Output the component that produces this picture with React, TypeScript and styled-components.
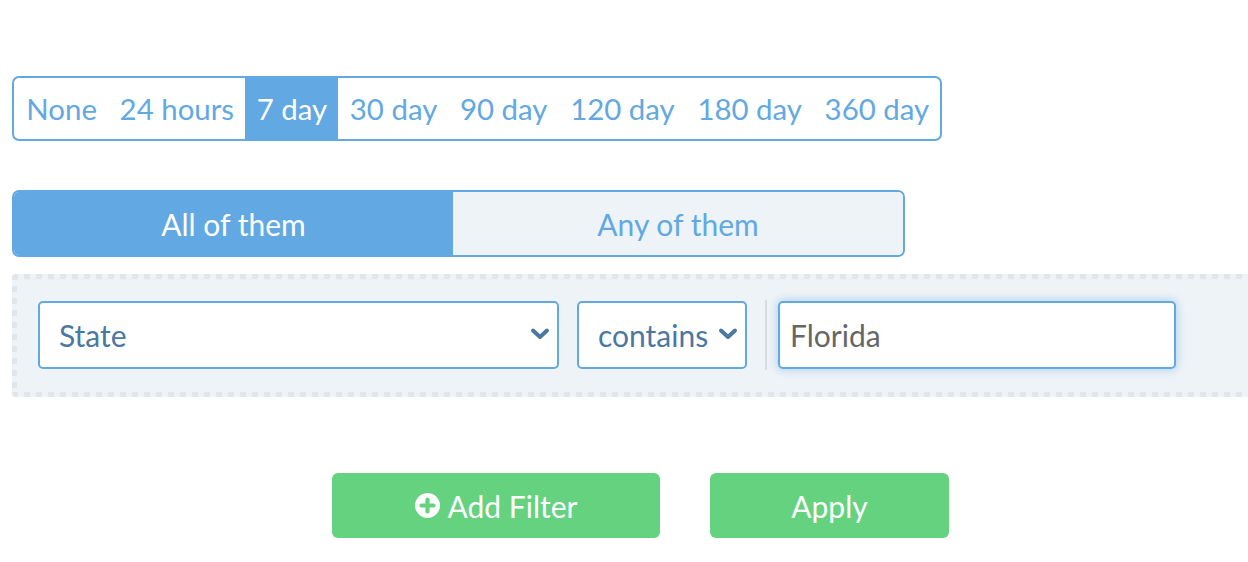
import React, { useState } from 'react';
import styled, { createGlobalStyle } from 'styled-components';

const BLUE = '#62a8e2';
const PALE = '#eef3f7';
const GREEN = '#64d27f';
const DOT = '#e2e6e9';

const periods = ['None', '24 hours', '7 day', '30 day', '90 day', '120 day', '180 day', '360 day'];

const GlobalStyle = createGlobalStyle`
  html, body {
    margin: 0;
    padding: 0;
    background: #fff;
    overflow: hidden;
  }
  body {
    font-family: Lato, "Open Sans", sans-serif;
  }
`;

const ChevronDown = () => (
  <svg width="20" height="14" viewBox="0 0 20 14" fill="none">
    <path d="M3 3.5 L10 10 L17 3.5" stroke="#4a78a0" strokeWidth="4" strokeLinecap="round" strokeLinejoin="round" />
  </svg>
);

const PlusCircle = () => (
  <svg width="25" height="25" viewBox="0 0 24 24">
    <circle cx="12" cy="12" r="12" fill="#fff" />
    <path d="M12 6.2 V17.8 M6.2 12 H17.8" stroke={GREEN} strokeWidth="4" strokeLinecap="round" />
  </svg>
);

export default function App() {
  const [period, setPeriod] = useState('7 day');
  const [mode, setMode] = useState<'all' | 'any'>('all');

  return (
    <>
      <GlobalStyle />
      <Page>
        <PeriodBar>
          {periods.map((p) => (
            <PeriodItem key={p} active={p === period} onClick={() => setPeriod(p)}>
              {p}
            </PeriodItem>
          ))}
        </PeriodBar>

        <Toggle>
          <ToggleHalf side="left" active={mode === 'all'} onClick={() => setMode('all')}>
            All of them
          </ToggleHalf>
          <ToggleHalf side="right" active={mode === 'any'} onClick={() => setMode('any')}>
            Any of them
          </ToggleHalf>
        </Toggle>

        <FilterPanel>
          <SelectBox width={521}>
            <span>State</span>
            <ChevronDown />
          </SelectBox>
          <SelectBox width={170}>
            <span>contains</span>
            <ChevronDown />
          </SelectBox>
          <Divider />
          <ValueInput defaultValue="Florida" />
        </FilterPanel>

        <ButtonRow>
          <GreenButton width={328}>
            <PlusCircle />
            Add Filter
          </GreenButton>
          <GreenButton width={239}>Apply</GreenButton>
        </ButtonRow>
      </Page>
    </>
  );
}

const Page = styled.div`
  padding: 76px 0 0 12px;
  width: 1270px;
  box-sizing: border-box;
  display: flex;
  flex-direction: column;
  align-items: flex-start;
`;

const PeriodBar = styled.div`
  display: inline-flex;
  border: 2px solid ${BLUE};
  border-radius: 7px;
  overflow: hidden;
  height: 65px;
  box-sizing: border-box;
  padding-left: 1px;
`;

const PeriodItem = styled.div<{ active: boolean }>`
  display: flex;
  align-items: center;
  padding: 0 11.35px;
  font-size: 29.4px;
  color: ${({ active }) => (active ? '#fff' : BLUE)};
  background: ${({ active }) => (active ? BLUE : 'transparent')};
  cursor: pointer;
`;

const Toggle = styled.div`
  margin-top: 49px;
  width: 893px;
  height: 67px;
  display: flex;
  border: 2px solid ${BLUE};
  border-radius: 7px;
  overflow: hidden;
  box-sizing: border-box;
`;

const ToggleHalf = styled.div<{ active: boolean; side: 'left' | 'right' }>`
  flex: ${({ side }) => (side === 'left' ? '0 0 439px' : '1')};
  display: flex;
  align-items: center;
  justify-content: center;
  font-size: 30px;
  color: ${({ active }) => (active ? '#fff' : BLUE)};
  background: ${({ active }) => (active ? BLUE : PALE)};
  cursor: pointer;
`;

const FilterPanel = styled.div`
  margin-top: 17px;
  width: 1256px;
  box-sizing: border-box;
  padding: 26px 26px 27px;
  display: flex;
  align-items: center;
  border-radius: 4px;
  background:
    repeating-linear-gradient(to right, ${DOT} 0 6px, transparent 6px 12px) top left / 100% 5px no-repeat,
    repeating-linear-gradient(to right, ${DOT} 0 6px, transparent 6px 12px) bottom left / 100% 5px no-repeat,
    repeating-linear-gradient(to bottom, ${DOT} 0 6px, transparent 6px 12px) top left / 5px 100% no-repeat,
    ${PALE};
`;

const SelectBox = styled.div<{ width: number }>`
  width: ${({ width }) => width}px;
  height: 68px;
  box-sizing: border-box;
  border: 2px solid ${BLUE};
  border-radius: 5px;
  background: #fff;
  display: flex;
  align-items: center;
  justify-content: space-between;
  padding: 0 7px 0 19px;
  margin-right: 18px;
  font-size: 30px;
  color: #4a78a0;
  svg {
    margin-bottom: 2px;
  }
`;

const Divider = styled.div`
  width: 2px;
  height: 70px;
  background: #d8dce0;
  margin-right: 11px;
`;

const ValueInput = styled.input`
  width: 398px;
  height: 68px;
  box-sizing: border-box;
  border: 2px solid ${BLUE};
  border-radius: 5px;
  background: #fff;
  padding: 0 10px;
  font-family: Lato, "Open Sans", sans-serif;
  font-size: 30px;
  color: #666;
  outline: none;
  box-shadow: 0 0 9px 1px rgba(98, 168, 226, 0.45);
`;

const ButtonRow = styled.div`
  margin-top: 76px;
  margin-left: 320px;
  display: flex;
  gap: 50px;
`;

const GreenButton = styled.button<{ width: number }>`
  width: ${({ width }) => width}px;
  height: 65px;
  border: none;
  border-radius: 6px;
  background: ${GREEN};
  color: #fff;
  font-family: Lato, "Open Sans", sans-serif;
  font-size: 30px;
  display: flex;
  align-items: center;
  justify-content: center;
  gap: 8px;
  cursor: pointer;
`;
